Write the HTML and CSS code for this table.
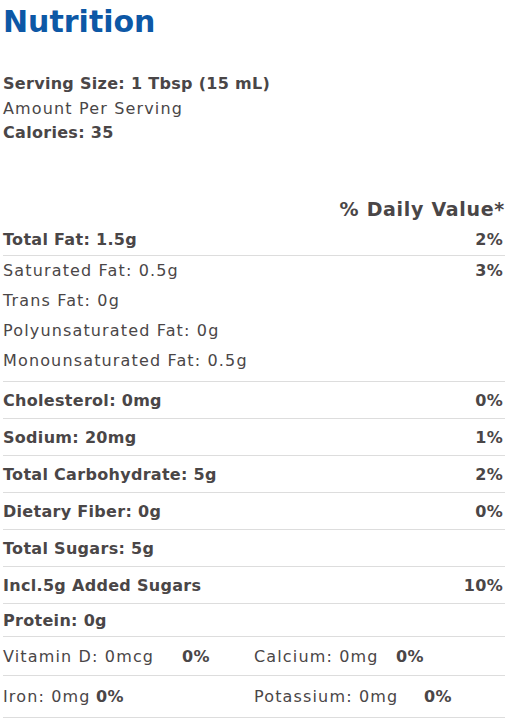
FILE: index.html
```html
<!DOCTYPE html>
<html>
<head>
<meta charset="utf-8">
<link rel="stylesheet" href="styles.css">
</head>
<body>
<div class="panel">
  <h1 class="title">Nutrition</h1>
  <div class="serving">
    <div class="b">Serving Size: 1 Tbsp (15 mL)</div>
    <div>Amount Per Serving</div>
    <div class="b">Calories: 35</div>
  </div>
  <div class="dv-head">% Daily Value*</div>
  <div class="row row-fat b"><span>Total Fat: 1.5g</span><span class="pct">2%</span></div>
  <div class="group">
    <div class="sub"><span>Saturated Fat: 0.5g</span><span class="pct b">3%</span></div>
    <div class="sub"><span>Trans Fat: 0g</span></div>
    <div class="sub"><span>Polyunsaturated Fat: 0g</span></div>
    <div class="sub"><span>Monounsaturated Fat: 0.5g</span></div>
  </div>
  <div class="row b"><span>Cholesterol: 0mg</span><span class="pct">0%</span></div>
  <div class="row b"><span>Sodium: 20mg</span><span class="pct">1%</span></div>
  <div class="row b"><span>Total Carbohydrate: 5g</span><span class="pct">2%</span></div>
  <div class="row b"><span>Dietary Fiber: 0g</span><span class="pct">0%</span></div>
  <div class="row b"><span>Total Sugars: 5g</span></div>
  <div class="row b"><span>Incl.5g Added Sugars</span><span class="pct">10%</span></div>
  <div class="row row-protein b"><span>Protein: 0g</span></div>
  <div class="row row-vit">
    <div class="cell"><span class="lbl lbl-vd">Vitamin D: 0mcg</span><span class="b">0%</span></div>
    <div class="cell"><span class="lbl lbl-ca">Calcium: 0mg</span><span class="b">0%</span></div>
  </div>
  <div class="row row-iron">
    <div class="cell"><span class="lbl lbl-fe">Iron: 0mg</span><span class="b">0%</span></div>
    <div class="cell"><span class="lbl lbl-k">Potassium: 0mg</span><span class="b">0%</span></div>
  </div>
</div>
</body>
</html>
```

FILE: styles.css
```css
html, body {
  margin: 0;
  padding: 0;
  background: #ffffff;
}
body {
  font-family: "DejaVu Sans", "Open Sans", sans-serif;
  color: #4a4647;
  font-size: 16px;
  letter-spacing: 1.15px;
}
.panel {
  width: 502px;
  padding-left: 3px;
}
.b {
  font-weight: bold;
  letter-spacing: 0.3px;
}
.title {
  margin: 0;
  font-size: 30px;
  line-height: 44px;
  font-weight: bold;
  letter-spacing: 0;
  color: #0d58a6;
}
.serving {
  margin-top: 28px;
  line-height: 24.5px;
}
.dv-head {
  margin-top: 48.5px;
  text-align: right;
  font-size: 19px;
  font-weight: bold;
  letter-spacing: 0.7px;
  line-height: 30px;
}
.row {
  display: flex;
  align-items: center;
  justify-content: space-between;
  height: 36px;
  border-bottom: 1px solid #dddddd;
}
.row-fat {
  height: 31px;
}
.row-protein {
  height: 32px;
}
.row-vit {
  height: 38px;
  justify-content: flex-start;
}
.row-iron {
  height: 41px;
  justify-content: flex-start;
}
.group {
  padding-bottom: 5px;
  border-bottom: 1px solid #dddddd;
}
.sub {
  display: flex;
  justify-content: space-between;
  line-height: 30px;
}
.pct {
  padding-right: 2px;
}
.cell {
  width: 252px;
  display: flex;
}
.lbl {
  flex: none;
}
.lbl-vd { width: 179px; }
.lbl-ca { width: 142px; }
.lbl-fe { width: 93px; }
.lbl-k { width: 170px; }
```
